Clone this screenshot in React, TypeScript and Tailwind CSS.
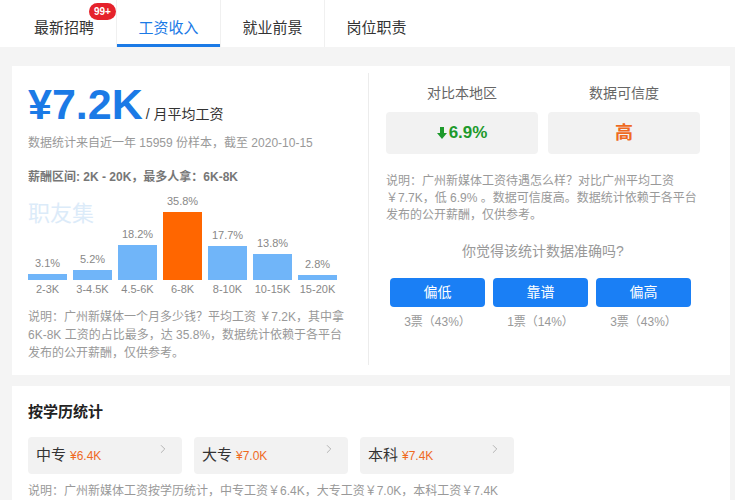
import { ChevronRight } from 'lucide-react';

const FONT = '"Liberation Sans", "Noto Sans CJK SC", sans-serif';

const tabs = ['最新招聘', '工资收入', '就业前景', '岗位职责'];

const bars = [
    { label: '2-3K', pct: 3.1 },
    { label: '3-4.5K', pct: 5.2 },
    { label: '4.5-6K', pct: 18.2 },
    { label: '6-8K', pct: 35.8, top: true },
    { label: '8-10K', pct: 17.7 },
    { label: '10-15K', pct: 13.8 },
    { label: '15-20K', pct: 2.8 },
];

const votes = [
    { name: '偏低', count: '3票（43%）' },
    { name: '靠谱', count: '1票（14%）' },
    { name: '偏高', count: '3票（43%）' },
];

const degrees = [
    { name: '中专', salary: '¥6.4K' },
    { name: '大专', salary: '¥7.0K' },
    { name: '本科', salary: '¥7.4K' },
];

function TabBar() {
    return (
        <div className="flex h-[47px] bg-white pl-3">
            {tabs.map((t, i) => (
                <div
                    key={t}
                    className={`relative flex w-[104px] items-end justify-center pb-2 text-[15px] leading-[22px] ${
                        i === 1 ? 'text-[#1b7ae6]' : 'text-[#333]'
                    } ${i > 0 ? 'border-l border-[#f0f0f0]' : ''}`}
                >
                    <span>{t}</span>
                    {i === 0 && (
                        <span className="absolute left-[77px] top-[3px] flex h-[17px] items-center rounded-full bg-[#e5222b] px-[5px] text-[10px] font-bold leading-none text-white">
                            99+
                        </span>
                    )}
                    {i === 1 && <span className="absolute bottom-0 left-0 right-0 h-[3px] bg-[#1b7ae6]" />}
                </div>
            ))}
        </div>
    );
}

function SalaryChart() {
    return (
        <div className="relative mt-[5px]">
            <div className="absolute left-0 top-[11px] text-[22px] leading-[22px] text-[#dcebf9]">职友集</div>
            <div className="relative flex h-[88px] items-end gap-[6px]">
                {bars.map((b) => (
                    <div key={b.label} className="flex w-[39px] flex-col items-center">
                        <span className="mb-1 text-[11px] leading-[14px] text-[#888]">{b.pct}%</span>
                        <div
                            className={`w-full ${b.top ? 'bg-[#ff6600]' : 'bg-[#70b5f9]'}`}
                            style={{ height: Math.round(b.pct * 1.9) }}
                        />
                    </div>
                ))}
            </div>
            <div className="flex h-[18px] items-center gap-[6px]">
                {bars.map((b) => (
                    <span key={b.label} className="w-[39px] text-center text-[11px] text-[#888]">
                        {b.label}
                    </span>
                ))}
            </div>
        </div>
    );
}

function LeftPanel() {
    return (
        <div className="w-[356px] px-4 pt-4">
            <div className="flex items-baseline">
                <span className="text-[43px] font-bold leading-[44px] text-[#1b7ae6]">¥7.2K</span>
                <span className="ml-[3px] text-[14px] text-[#333]">/ 月平均工资</span>
            </div>
            <p className="mt-[7px] text-[12px] leading-5 text-[#999]">数据统计来自近一年 15959 份样本，截至 2020-10-15</p>
            <p className="mt-[14px] text-[12px] font-bold leading-5 text-[#777]">薪酬区间: 2K - 20K，最多人拿：6K-8K</p>
            <SalaryChart />
            <p className="mt-[10px] w-[320px] text-[12px] leading-[18px] text-[#999]">
                说明：广州新媒体一个月多少钱？平均工资 ￥7.2K，其中拿 6K-8K 工资的占比最多，达 35.8%，数据统计依赖于各平台发布的公开薪酬，仅供参考。
            </p>
        </div>
    );
}

function RightPanel() {
    return (
        <div className="pl-[17px] pt-[17px]">
            <div className="w-[314px]">
                <div className="flex gap-[10px]">
                    <div className="w-[152px]">
                        <div className="text-center text-[14px] leading-5 text-[#666]">对比本地区</div>
                        <div className="mt-[9px] flex h-[42px] items-center justify-center rounded bg-[#f2f2f2] text-[17px] font-bold text-[#1e9a2c]">
                            <svg width="10" height="12" viewBox="0 0 10 12" className="mr-[2px]">
                                <path d="M3 0h4v6h3L5 12 0 6h3z" fill="#1e9a2c" />
                            </svg>
                            6.9%
                        </div>
                    </div>
                    <div className="w-[152px]">
                        <div className="text-center text-[14px] leading-5 text-[#666]">数据可信度</div>
                        <div className="mt-[9px] flex h-[42px] items-center justify-center rounded bg-[#f2f2f2] text-[18px] font-bold text-[#ef6a1f]">
                            高
                        </div>
                    </div>
                </div>
                <p className="mt-[19px] text-[12px] leading-[17px] text-[#999]">
                    说明：广州新媒体工资待遇怎么样？对比广州平均工资 ￥7.7K，低 6.9% 。数据可信度高。数据统计依赖于各平台发布的公开薪酬，仅供参考。
                </p>
                <div className="mt-[17px] text-center text-[14px] leading-5 text-[#999]">你觉得该统计数据准确吗?</div>
                <div className="mt-[17px] flex gap-2 pl-1">
                    {votes.map((v) => (
                        <div key={v.name} className="flex w-[95px] flex-col items-center">
                            <button className="h-[29px] w-full rounded bg-[#1a7ff5] text-[14px] text-white">{v.name}</button>
                            <span className="mt-[6px] text-[12px] leading-[18px] text-[#999]">{v.count}</span>
                        </div>
                    ))}
                </div>
            </div>
        </div>
    );
}

function EducationCard() {
    return (
        <div className="mt-[11px] w-[718px] bg-white px-4 pt-[15px]">
            <h3 className="text-[15px] font-bold leading-[22px] text-[#222]">按学历统计</h3>
            <div className="mt-[14px] flex gap-3">
                {degrees.map((d) => (
                    <div key={d.name} className="flex h-[37px] w-[154px] rounded bg-[#f2f2f2] pl-2 pr-3">
                        <div className="flex flex-1 items-center gap-1">
                            <span className="text-[15px] text-[#333]">{d.name}</span>
                            <span className="text-[12px] text-[#ef6a1f]">{d.salary}</span>
                        </div>
                        <ChevronRight size={14} strokeWidth={1.2} className="mt-[5px] text-[#999]" />
                    </div>
                ))}
            </div>
            <p className="mt-2 text-[12px] leading-[18px] text-[#999]">
                说明：广州新媒体工资按学历统计，中专工资￥6.4K，大专工资￥7.0K，本科工资￥7.4K
            </p>
        </div>
    );
}

export default function App() {
    return (
        <div className="h-[500px] overflow-hidden bg-[#f4f4f4]" style={{ fontFamily: FONT }}>
            <TabBar />
            <div className="px-3 pt-[19px]">
                <div className="flex h-[309px] w-[718px] bg-white">
                    <LeftPanel />
                    <div className="mt-[7px] mb-[10px] w-px bg-[#ececec]" />
                    <RightPanel />
                </div>
                <EducationCard />
            </div>
        </div>
    );
}
